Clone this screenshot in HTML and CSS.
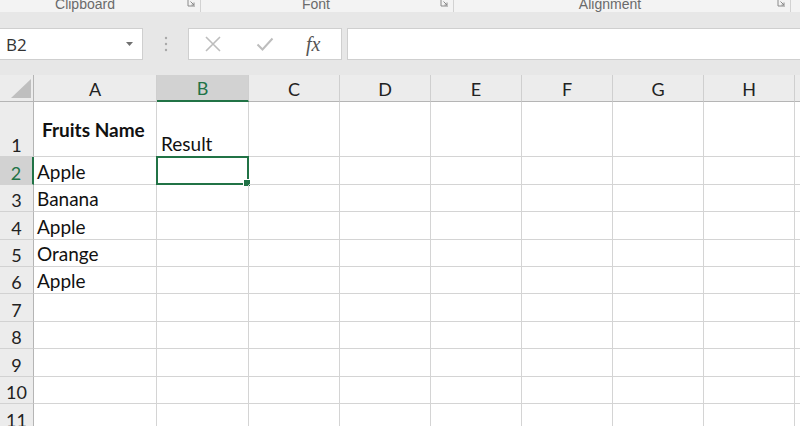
FILE: index.html
```html
<!DOCTYPE html>
<html>
<head>
<meta charset="utf-8">
<link rel="stylesheet" href="styles.css">
</head>
<body>
<div class="app">
  <div class="ribbon-labels">
    <div class="group g-clip"><span class="glabel">Clipboard</span><svg class="launcher" width="9" height="7" viewBox="0 0 9 7"><path d="M1 0V6H8" fill="none" stroke="#8a8a8a" stroke-width="1"/><path d="M3.5 1.5L7 5M7 2.5V5H4.5" fill="none" stroke="#8a8a8a" stroke-width="1"/></svg></div>
    <div class="group g-font"><span class="glabel">Font</span><svg class="launcher" width="9" height="7" viewBox="0 0 9 7"><path d="M1 0V6H8" fill="none" stroke="#8a8a8a" stroke-width="1"/><path d="M3.5 1.5L7 5M7 2.5V5H4.5" fill="none" stroke="#8a8a8a" stroke-width="1"/></svg></div>
    <div class="group g-align"><span class="glabel">Alignment</span><svg class="launcher" width="9" height="7" viewBox="0 0 9 7"><path d="M1 0V6H8" fill="none" stroke="#8a8a8a" stroke-width="1"/><path d="M3.5 1.5L7 5M7 2.5V5H4.5" fill="none" stroke="#8a8a8a" stroke-width="1"/></svg></div>
    <div class="group g-rest"></div>
  </div>
  <div class="band"></div>
  <div class="formula-bar">
    <div class="name-box"><span class="name">B2</span><svg class="dd" width="7" height="4" viewBox="0 0 7 4"><path d="M0 0H7L3.5 4Z" fill="#707070"/></svg></div>
    <div class="dots"><svg width="4" height="16" viewBox="0 0 4 16"><circle cx="2" cy="2" r="1.2" fill="#a8a8a8"/><circle cx="2" cy="8" r="1.2" fill="#a8a8a8"/><circle cx="2" cy="14" r="1.2" fill="#a8a8a8"/></svg></div>
    <div class="fx-box">
      <svg class="ic" width="18" height="16" viewBox="0 0 18 16"><path d="M2 1L16 15M16 1L2 15" stroke="#bdbdbd" stroke-width="1.6" fill="none"/></svg>
      <svg class="ic" width="18" height="16" viewBox="0 0 18 16"><path d="M1.5 8.5L6.5 13.5L16.5 2.5" stroke="#bdbdbd" stroke-width="2" fill="none"/></svg>
      <span class="fx">fx</span>
    </div>
    <div class="formula-input"></div>
  </div>
  <div class="gap"></div>
  <div class="sheet">
    <div class="ch corner"><svg width="20" height="19" viewBox="0 0 20 19"><path d="M20 0V19H0Z" fill="#bfbfbf"/></svg></div>
    <div class="ch">A</div><div class="ch sel">B</div><div class="ch">C</div><div class="ch">D</div><div class="ch">E</div><div class="ch">F</div><div class="ch">G</div><div class="ch">H</div><div class="ch">I</div>

    <div class="rh r1">1</div><div class="c r1 bold">Fruits Name</div><div class="c r1 bottom">Result</div><div class="c r1"></div><div class="c r1"></div><div class="c r1"></div><div class="c r1"></div><div class="c r1"></div><div class="c r1"></div><div class="c r1"></div>

    <div class="rh rsel">2</div><div class="c">Apple</div><div class="c active"><span class="handle"></span></div><div class="c"></div><div class="c"></div><div class="c"></div><div class="c"></div><div class="c"></div><div class="c"></div><div class="c"></div>

    <div class="rh">3</div><div class="c">Banana</div><div class="c"></div><div class="c"></div><div class="c"></div><div class="c"></div><div class="c"></div><div class="c"></div><div class="c"></div><div class="c"></div>

    <div class="rh">4</div><div class="c">Apple</div><div class="c"></div><div class="c"></div><div class="c"></div><div class="c"></div><div class="c"></div><div class="c"></div><div class="c"></div><div class="c"></div>

    <div class="rh">5</div><div class="c">Orange</div><div class="c"></div><div class="c"></div><div class="c"></div><div class="c"></div><div class="c"></div><div class="c"></div><div class="c"></div><div class="c"></div>

    <div class="rh">6</div><div class="c">Apple</div><div class="c"></div><div class="c"></div><div class="c"></div><div class="c"></div><div class="c"></div><div class="c"></div><div class="c"></div><div class="c"></div>

    <div class="rh">7</div><div class="c"></div><div class="c"></div><div class="c"></div><div class="c"></div><div class="c"></div><div class="c"></div><div class="c"></div><div class="c"></div><div class="c"></div>

    <div class="rh">8</div><div class="c"></div><div class="c"></div><div class="c"></div><div class="c"></div><div class="c"></div><div class="c"></div><div class="c"></div><div class="c"></div><div class="c"></div>

    <div class="rh">9</div><div class="c"></div><div class="c"></div><div class="c"></div><div class="c"></div><div class="c"></div><div class="c"></div><div class="c"></div><div class="c"></div><div class="c"></div>

    <div class="rh">10</div><div class="c"></div><div class="c"></div><div class="c"></div><div class="c"></div><div class="c"></div><div class="c"></div><div class="c"></div><div class="c"></div><div class="c"></div>

    <div class="rh">11</div><div class="c"></div><div class="c"></div><div class="c"></div><div class="c"></div><div class="c"></div><div class="c"></div><div class="c"></div><div class="c"></div><div class="c"></div>
  </div>
</div>
</body>
</html>
```

FILE: styles.css
```css
* { box-sizing: border-box; }
html, body { margin: 0; padding: 0; }
body {
  width: 800px;
  height: 426px;
  overflow: hidden;
  background: #ffffff;
  font-family: Lato, "Open Sans", sans-serif;
}
.app { width: 800px; height: 426px; overflow: hidden; background: #e6e6e6; }

.ribbon-labels {
  height: 12px;
  background: #f3f3f3;
  display: flex;
  overflow: hidden;
}
.group {
  position: relative;
  height: 12px;
  border-right: 1px solid #d2d2d2;
  display: flex;
  justify-content: center;
}
.g-clip { width: 201px; padding-right: 30px; }
.g-font { width: 253px; padding-right: 22px; }
.g-align { width: 337px; padding-right: 24px; }
.g-rest { flex: 1; border-right: none; }
.glabel {
  font-family: "Liberation Sans", sans-serif;
  font-size: 14px;
  line-height: 14px;
  color: #6a6a6a;
  margin-top: -3px;
}
.launcher { position: absolute; right: 4px; top: 0; }

.band { height: 16px; background: #e7e7e7; }

.formula-bar {
  height: 32px;
  display: flex;
  background: #e7e7e7;
}
.name-box {
  width: 143px;
  height: 32px;
  background: #fff;
  border: 1px solid #cfcfcf;
  border-left: none;
  display: flex;
  align-items: center;
  justify-content: space-between;
  padding: 0 9px 0 6px;
}
.name {
  font-family: "Open Sans", sans-serif;
  font-size: 17px;
  color: #333;
}
.dots {
  width: 45px;
  display: flex;
  align-items: center;
  justify-content: center;
}
.fx-box {
  width: 154px;
  height: 32px;
  background: #fff;
  border: 1px solid #cfcfcf;
  display: flex;
  align-items: center;
  padding-left: 15px;
  gap: 34px;
}
.fx {
  font-family: "Liberation Serif", serif;
  font-style: italic;
  font-size: 20px;
  color: #555;
  margin-left: -2px;
}
.formula-input {
  flex: 1;
  margin-left: 5px;
  height: 32px;
  background: #fff;
  border: 1px solid #cfcfcf;
  border-right: none;
}
.gap { height: 15px; background: #e7e7e7; }

.sheet {
  display: grid;
  grid-template-columns: 34px 123px 92px 91px 91px 91px 91px 91px 91px 91px;
  grid-template-rows: 27px 55px 28px 27px 28px 27px 27px 28px 27px 28px 27px 28px;
  background: #fff;
  width: 890px;
}
.ch {
  background: #ececec;
  border-bottom: 1px solid #b5b5b5;
  border-right: 1px solid #cfcfcf;
  font-size: 18px;
  color: #222;
  display: flex;
  align-items: flex-end;
  justify-content: center;
  padding-bottom: 1px;
}
.ch.corner { align-items: flex-end; justify-content: flex-end; padding: 0 2px 3px 0; border-right: 1px solid #b5b5b5; }
.ch.sel {
  background: #d2d2d2;
  color: #217346;
  border-bottom: 2px solid #217346;
}
.rh {
  background: #ececec;
  border-right: 1px solid #b5b5b5;
  border-bottom: 1px solid #d2d2d2;
  font-size: 18px;
  color: #222;
  display: flex;
  align-items: flex-end;
  justify-content: center;
  padding-bottom: 0;
}
.rh.rsel {
  background: #d2d2d2;
  color: #217346;
  border-right: 2px solid #217346;
}
.c {
  position: relative;
  border-right: 1px solid #d4d4d4;
  border-bottom: 1px solid #d4d4d4;
  font-size: 19px;
  color: #111;
  display: flex;
  align-items: flex-end;
  padding: 0 0 1px 3px;
  white-space: nowrap;
}
.c.bold {
  font-weight: bold;
  align-items: center;
  padding-left: 8px;
  padding-bottom: 0;
}
.c.bottom { padding-left: 4px; }
.c.active {
  border: 2px solid #217346;
  margin: -1px 0 0 -1px;
}
.handle {
  position: absolute;
  right: -4px;
  bottom: -4px;
  width: 6px;
  height: 6px;
  background: #217346;
  border: 1px solid #fff;
  box-sizing: content-box;
}
```
